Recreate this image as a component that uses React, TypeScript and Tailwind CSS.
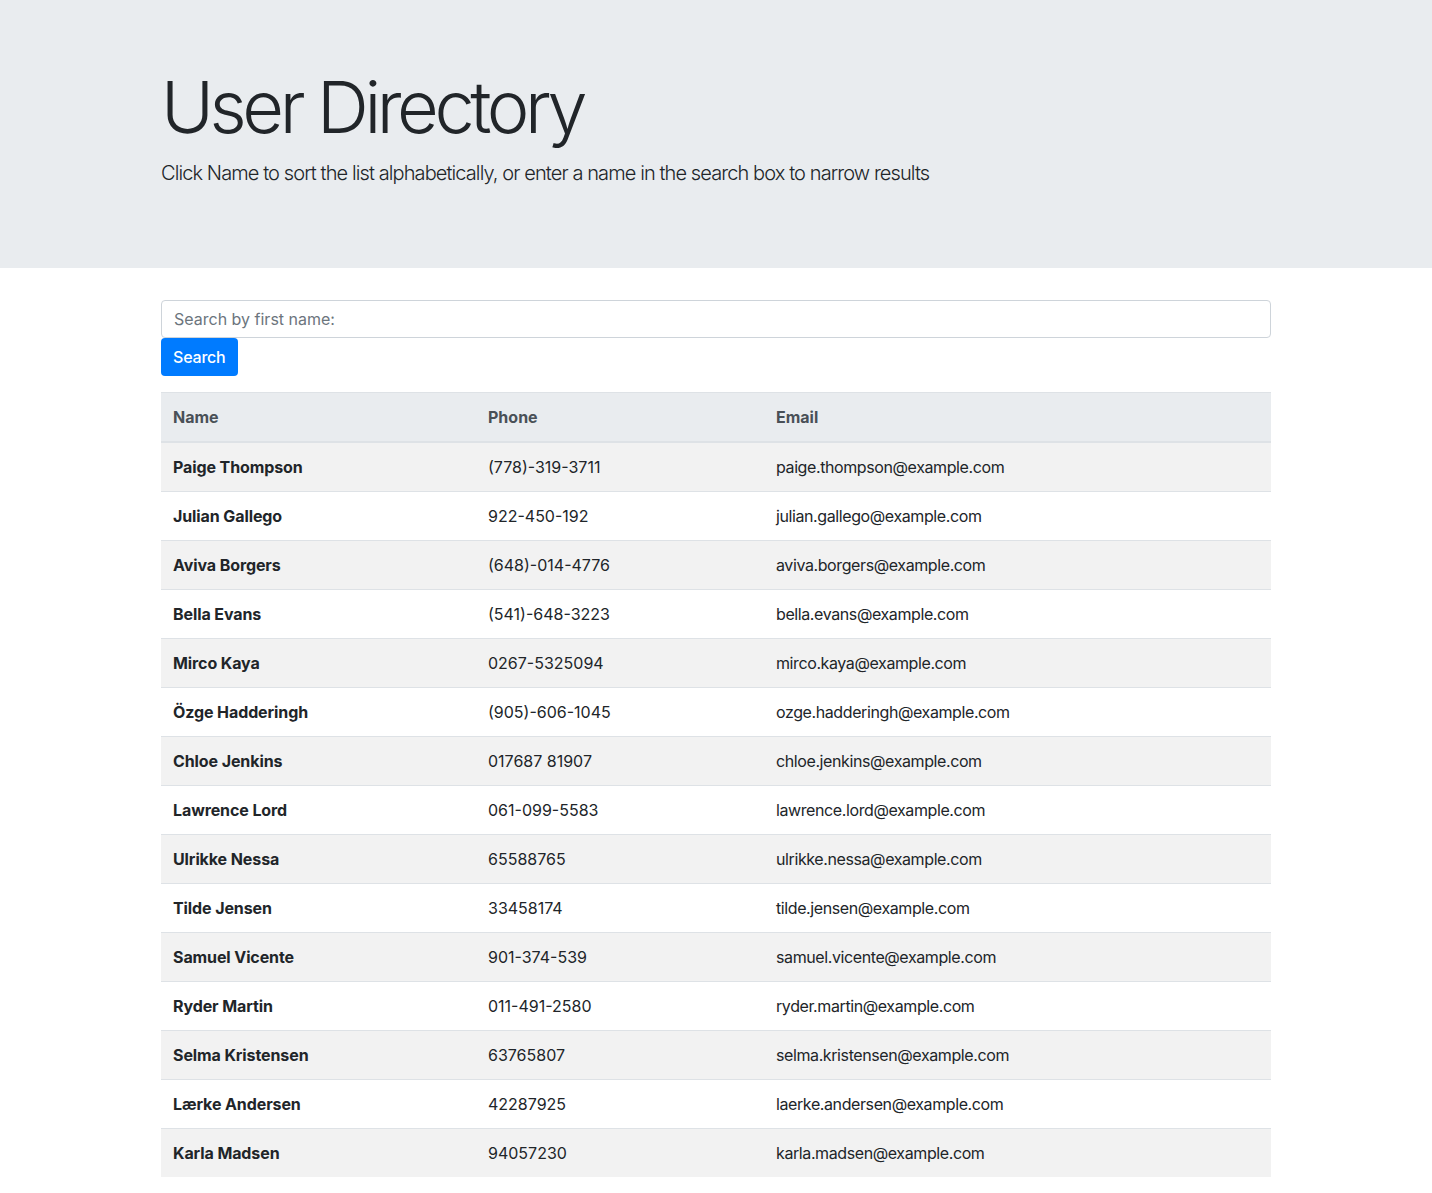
import React from "react";

const users = [
  ["Paige Thompson", "(778)-319-3711", "paige.thompson@example.com"],
  ["Julian Gallego", "922-450-192", "julian.gallego@example.com"],
  ["Aviva Borgers", "(648)-014-4776", "aviva.borgers@example.com"],
  ["Bella Evans", "(541)-648-3223", "bella.evans@example.com"],
  ["Mirco Kaya", "0267-5325094", "mirco.kaya@example.com"],
  ["Özge Hadderingh", "(905)-606-1045", "ozge.hadderingh@example.com"],
  ["Chloe Jenkins", "017687 81907", "chloe.jenkins@example.com"],
  ["Lawrence Lord", "061-099-5583", "lawrence.lord@example.com"],
  ["Ulrikke Nessa", "65588765", "ulrikke.nessa@example.com"],
  ["Tilde Jensen", "33458174", "tilde.jensen@example.com"],
  ["Samuel Vicente", "901-374-539", "samuel.vicente@example.com"],
  ["Ryder Martin", "011-491-2580", "ryder.martin@example.com"],
  ["Selma Kristensen", "63765807", "selma.kristensen@example.com"],
  ["Lærke Andersen", "42287925", "laerke.andersen@example.com"],
  ["Karla Madsen", "94057230", "karla.madsen@example.com"],
];

export default function App() {
  return (
    <div className="min-h-[1193px] bg-white text-[#212529] [font-family:Inter,'Noto_Sans',sans-serif] text-[16px] leading-[24px]">
      <div className="bg-[#e9ecef] px-8 py-16 mb-8">
        <div className="w-[1110px] mx-auto">
          <h1 className="text-[72px] leading-[86.4px] font-light tracking-[-4.4px] mb-2">User Directory</h1>
          <p className="text-[20px] leading-[30px] font-light tracking-[-0.9px] mb-4">
            Click Name to sort the list alphabetically, or enter a name in the search box to narrow results
          </p>
        </div>
      </div>
      <div className="w-[1110px] mx-auto">
        <form className="mb-4" onSubmit={(e) => e.preventDefault()}>
          <input
            type="text"
            placeholder="Search by first name:"
            className="block w-full h-[38px] px-3 py-1.5 border border-[#ced4da] rounded-[4px] text-[16px] text-[#495057] placeholder:text-[#6c757d] outline-none"
          />
          <button
            type="submit"
            className="h-[38px] px-3 bg-[#007bff] text-white rounded-[4px] text-[16px] leading-[24px] font-medium tracking-[-0.2px]"
          >
            Search
          </button>
        </form>
        <table className="w-full border-collapse mb-4">
          <thead>
            <tr className="bg-[#e9ecef] text-[#495057]">
              <th className="w-[315px] text-left font-bold p-3 border-t border-[#dee2e6] border-b-2 border-b-[#dee2e6]">Name</th>
              <th className="w-[288px] text-left font-bold p-3 border-t border-[#dee2e6] border-b-2 border-b-[#dee2e6]">Phone</th>
              <th className="text-left font-bold p-3 border-t border-[#dee2e6] border-b-2 border-b-[#dee2e6]">Email</th>
            </tr>
          </thead>
          <tbody>
            {users.map((u, i) => (
              <tr key={u[0]} className={i % 2 === 0 ? "bg-[#f2f2f2]" : "bg-white"}>
                <td className={"p-3 font-bold tracking-[-0.1px] " + (i === 0 ? "" : "border-t border-[#dee2e6]")}>{u[0]}</td>
                <td className={"p-3 " + (i === 0 ? "" : "border-t border-[#dee2e6]")}>{u[1]}</td>
                <td className={"p-3 tracking-[-0.4px] " + (i === 0 ? "" : "border-t border-[#dee2e6]")}>{u[2]}</td>
              </tr>
            ))}
          </tbody>
        </table>
      </div>
    </div>
  );
}
